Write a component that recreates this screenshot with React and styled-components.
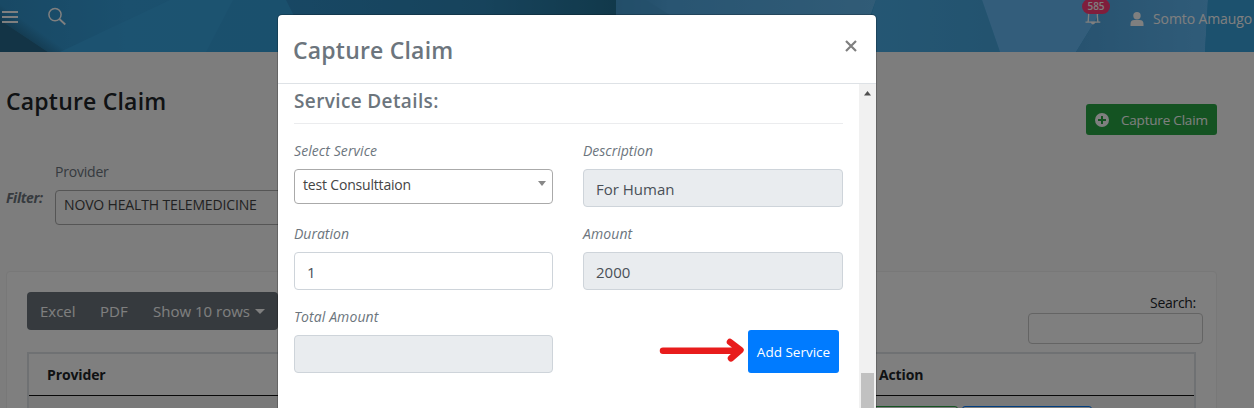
import React from "react";
import styled, { createGlobalStyle, css } from "styled-components";

const Global = createGlobalStyle`
  * { box-sizing: border-box; }
  html, body { margin: 0; overflow: hidden; }
  body { font-family: "Open Sans", "Noto Sans", sans-serif; font-size: 14px; color: #212529; background: #fafafa; }
`;

const Page = styled.div`
  position: relative;
  width: 1254px;
  height: 408px;
  overflow: hidden;
  background: #fafafa;
`;

const Txt = styled.span`
  display: inline-block;
  white-space: nowrap;
  letter-spacing: ${(p) => p.$ls || 0}px;
`;

/* ---------- page behind the dialog ---------- */
const TopBar = styled.header`
  position: relative;
  height: 52px;
  display: flex;
  justify-content: space-between;
  background: #34a0e0;
  color: #fff;
`;
const Facets = styled.svg`
  position: absolute;
  inset: 0;
`;
const NavGroup = styled.div`
  position: relative;
  display: flex;
  align-items: flex-start;
`;
const MenuIcon = styled.svg`
  margin: 11px 0 0 2px;
`;
const SearchIcon = styled.svg`
  margin: 7px 0 0 29px;
`;
const Bell = styled.div`
  position: relative;
  margin-top: 8px;
  width: 18px;
  height: 18px;
`;
const Count = styled.span`
  position: absolute;
  left: -2px;
  top: -9px;
  width: 28px;
  height: 15px;
  border-radius: 8px;
  background: #ff3d78;
  font-size: 10px;
  font-weight: 600;
  line-height: 15px;
  text-align: center;
`;
const UserIcon = styled.svg`
  margin: 12px 0 0 28px;
`;
const UserName = styled.div`
  width: 101px;
  margin: 9px 0 0 9px;
  font-size: 14px;
  line-height: 20px;
`;
const Heading = styled.div`
  display: flex;
  justify-content: space-between;
  height: 110px;
  padding: 34px 37px 0 6px;
`;
const PageTitle = styled.h1`
  margin: 0;
  font-size: 23px;
  font-weight: 600;
  line-height: 30px;
`;
const GreenButton = styled.button`
  display: flex;
  align-items: center;
  width: 131px;
  height: 31px;
  margin-top: 18px;
  padding: 0 0 0 9px;
  gap: 12px;
  border: 0;
  border-radius: 3px;
  background: #28a745;
  color: #fff;
  font: 13.5px "Open Sans", sans-serif;
`;
const Filters = styled.div`
  display: flex;
  height: 109px;
  padding-left: 6px;
`;
const FilterTag = styled.div`
  width: 49px;
  padding-top: 26px;
  font-size: 14px;
  font-weight: 700;
  font-style: italic;
  line-height: 20px;
  color: #6c757d;
`;
const FilterField = styled.div`
  width: 300px;
  line-height: 20px;
  color: #6c757d;
`;
const Select = styled.div`
  display: flex;
  justify-content: space-between;
  height: 35px;
  padding: 4px 6px 0 8px;
  border: 1px solid #aaa;
  border-radius: 4px;
  background: #fff;
  color: #444;
  font-size: 14px;
  line-height: 21px;
  ${(p) => p.$page && css`margin-top: 8px; background: transparent; line-height: 20px;`}
`;
const Card = styled.section`
  width: 1211px;
  height: 150px;
  margin-left: 6px;
  padding: 20px 13px 0 20px;
  border: 1px solid #f0f0f0;
  border-radius: 4px;
  background: #fff;
`;
const CardTools = styled.div`
  display: flex;
  justify-content: space-between;
  height: 60px;
`;
const ButtonBar = styled.div`
  display: flex;
  align-items: center;
  width: 251px;
  height: 38px;
  padding-left: 13px;
  border-radius: 4px;
  background: #6c757d;
  color: #fff;
  font-size: 15px;
`;
const BarItem = styled.div`
  width: ${(p) => p.$w}px;
  display: flex;
  align-items: center;
  gap: 5px;
`;
const SearchBox = styled.label`
  display: flex;
  flex-direction: column;
  align-items: flex-end;
  width: 175px;
  font-size: 14px;
  line-height: 20px;
  margin-top: 1px;
`;
const SearchLabel = styled.span`
  padding-right: 7px;
`;
const SearchInput = styled.div`
  width: 175px;
  height: 31px;
  border: 1px solid #c8c8c8;
  border-radius: 4px;
`;
const Table = styled.div`
  width: 1169px;
  height: 80px;
  border: 2px solid #dee2e6;
`;
const HeadRow = styled.div`
  display: flex;
  align-items: center;
  height: 42px;
  padding-left: 18px;
  border-bottom: 1px solid #111;
  font-weight: 700;
  font-size: 14px;
`;
const HeadCell = styled.div`
  width: ${(p) => p.$w}px;
`;
const BodyRow = styled.div`
  display: flex;
  gap: 4px;
  height: 34px;
  padding: 10px 0 0 790px;
  background: #f2f2f2;
`;
const RowAction = styled.div`
  flex: none;
  width: ${(p) => p.$w}px;
  height: 30px;
  border: 1px solid ${(p) => p.$c};
  border-radius: 3px;
  background: #fff;
`;

/* ---------- dialog ---------- */
const Overlay = styled.div`
  position: absolute;
  inset: 0;
  display: flex;
  align-items: flex-start;
  padding: 14px 0 0 277px;
  background: rgba(0, 0, 0, 0.5);
`;
const Dialog = styled.div`
  width: 600px;
  height: 420px;
  border: 1px solid rgba(0, 0, 0, 0.2);
  border-radius: 5px;
  background: #fff;
  background-clip: padding-box;
  color: #6c757d;
`;
const DialogHeader = styled.div`
  display: flex;
  justify-content: space-between;
  height: 69px;
  padding: 20px 19px 0 15px;
  border-bottom: 1px solid #dee2e6;
`;
const DialogTitle = styled.h2`
  margin: 0;
  font-size: 23px;
  font-weight: 600;
  line-height: 30px;
`;
const CloseIcon = styled.svg`
  margin-top: 5px;
`;
const DialogBody = styled.div`
  display: flex;
  height: 350px;
`;
const Form = styled.div`
  width: 581px;
  padding: 4px 16px 0;
`;
const SectionTitle = styled.h3`
  height: 36px;
  margin: 0 0 17px;
  border-bottom: 1px solid #ebecee;
  font-size: 19px;
  font-weight: 600;
  line-height: 27px;
`;
const Grid = styled.div`
  display: grid;
  grid-template-columns: 259px 260px;
  column-gap: 30px;
  grid-auto-rows: 83px;
`;
const Label = styled.div`
  height: 28px;
  font-size: 14px;
  font-style: italic;
  line-height: 20px;
`;
const Input = styled.div`
  height: 38px;
  padding: 0 12px;
  border: 1px solid #ced4da;
  border-radius: 4px;
  background: ${(p) => (p.$off ? "#e9ecef" : "#fff")};
  color: #495057;
  font-size: 15px;
  line-height: 39px;
`;
const Actions = styled.div`
  display: flex;
  justify-content: flex-end;
  align-items: flex-start;
  padding: 23px 4px 0 0;
`;
const Arrow = styled.svg`
  margin: 8px 3px 0 0;
`;
const BlueButton = styled.button`
  width: 91px;
  height: 43px;
  padding: 0;
  border: 0;
  border-radius: 3px;
  background: #007bff;
  color: #fff;
  font: 13.5px "Open Sans", sans-serif;
`;
const Scrollbar = styled.div`
  display: flex;
  flex-direction: column;
  justify-content: space-between;
  width: 17px;
  padding: 7px 2px 0;
  background: #f1f1f1;
`;
const Thumb = styled.div`
  width: 13px;
  height: 61px;
  background: #c1c1c1;
`;
const Caret = styled.i`
  flex: none;
  width: 0;
  height: 0;
  border: ${(p) => p.$s}px solid transparent;
  border-top: ${(p) => p.$h || p.$s}px solid ${(p) => p.$c};
  border-bottom: 0;
  margin-top: ${(p) => p.$mt || 0}px;
`;

function Field({ label, ls, children }) {
  return (
    <div>
      <Label><Txt $ls={ls}>{label}</Txt></Label>
      {children}
    </div>
  );
}

export default function App() {
  return (
    <Page>
      <Global />
      <TopBar>
        <Facets width="1254" height="52" viewBox="0 0 1254 52">
          <defs>
            <linearGradient id="deep"><stop offset="0" stopColor="#308fc8" /><stop offset=".6" stopColor="#2e87b8" /><stop offset="1" stopColor="#237296" /></linearGradient>
            <linearGradient id="base"><stop offset="0" stopColor="#3192ca" /><stop offset=".1" stopColor="#36a0dc" /><stop offset=".22" stopColor="#35a0da" /></linearGradient>
            <linearGradient id="rise"><stop offset="0" stopColor="#3f96cc" /><stop offset=".2" stopColor="#52aae4" /><stop offset="1" stopColor="#62b8ee" /></linearGradient>
            <linearGradient id="mid"><stop offset="0" stopColor="#4aaee8" /><stop offset="1" stopColor="#46a6de" /></linearGradient>
            <linearGradient id="wing"><stop offset="0" stopColor="#50a6e0" /><stop offset="1" stopColor="#60b8f2" /></linearGradient>
            <linearGradient id="fold" gradientUnits="userSpaceOnUse" x1="24" y1="46" x2="36" y2="29">
              <stop offset="0" stopColor="#205b7a" />
              <stop offset="1" stopColor="#205b7a" stopOpacity="0" />
            </linearGradient>
          </defs>
          <path d="M0 0H1254V52H0Z" fill="url(#base)" />
          <path d="M0 0L72 52H48L0 20Z" fill="url(#fold)" opacity=".75" />
          <path d="M0 20L48 52H0Z" fill="#27698c" />
          <path d="M60 52L170 0H233L206 52Z" fill="#3ba8e4" opacity=".7" />
          <path d="M286 0H616V52H312Z" fill="url(#deep)" />
          <path d="M616 0H876L865 30V52H616Z" fill="url(#rise)" />
          <path d="M616 0H646L700 34H616Z" fill="#48a0d6" opacity=".7" />
          <path d="M876 0H982L1000 52H860Z" fill="url(#mid)" />
          <path d="M982 0H1108L1076 52H1000Z" fill="#66bbf6" />
          <path d="M1108 0H1208L1205 52H1076Z" fill="url(#wing)" />
          <path d="M1208 0H1254V52H1205Z" fill="#38a2dc" />
        </Facets>
        <NavGroup>
          <MenuIcon width="16" height="13" viewBox="0 0 16 13"><path d="M0 1H16M0 6H16M0 11H16" stroke="#fff" strokeWidth="2" /></MenuIcon>
          <SearchIcon width="20" height="20" viewBox="0 0 20 20" fill="none" stroke="#fff" strokeWidth="1.5"><circle cx="8" cy="7.6" r="6.1" /><path d="M12.3 12L18.3 17.5" strokeWidth="1.8" /></SearchIcon>
        </NavGroup>
        <NavGroup>
          <Bell>
            <svg width="18" height="18" viewBox="0 0 18 18" fill="none" stroke="#fff" strokeWidth="1.3"><path d="M1.5 14.2H16.3M4 14C4.7 12 4.2 7 5 4.5Q6 2 9 2T13 4.5C13.8 7 13.3 12 14 14" /><path d="M7.3 14.5Q9 17.4 10.7 14.5Z" fill="#fff" /></svg>
            <Count>585</Count>
          </Bell>
          <UserIcon width="14" height="14" viewBox="0 0 14 14" fill="#fff"><circle cx="7" cy="3.7" r="3.7" /><path d="M.5 14V12Q.5 8 4.3 8H9.7Q13.5 8 13.5 12V14Z" /></UserIcon>
          <UserName><Txt $ls={-0.1}>Somto Amaugo</Txt></UserName>
        </NavGroup>
      </TopBar>

      <Heading>
        <PageTitle><Txt $ls={0.2}>Capture Claim</Txt></PageTitle>
        <GreenButton>
          <svg width="14" height="14" viewBox="0 0 14 14"><circle cx="7" cy="7" r="7" fill="#fff" /><path d="M7 3V11M3 7H11" stroke="#28a745" strokeWidth="2" /></svg>
          <Txt $ls={-0.2}>Capture Claim</Txt>
        </GreenButton>
      </Heading>

      <Filters>
        <FilterTag><Txt $ls={-0.35}>Filter:</Txt></FilterTag>
        <FilterField>
          <Txt $ls={-0.2}>Provider</Txt>
          <Select $page><Txt $ls={-0.15}>NOVO HEALTH TELEMEDICINE</Txt></Select>
        </FilterField>
      </Filters>

      <Card>
        <CardTools>
          <ButtonBar>
            <BarItem $w={60}><Txt>Excel</Txt></BarItem>
            <BarItem $w={53}><Txt>PDF</Txt></BarItem>
            <BarItem $w={120}><Txt>Show 10 rows</Txt><Caret $s={5} $c="#fff" /></BarItem>
          </ButtonBar>
          <SearchBox>
            <SearchLabel><Txt $ls={-0.3}>Search:</Txt></SearchLabel>
            <SearchInput />
          </SearchBox>
        </CardTools>
        <Table>
          <HeadRow>
            <HeadCell $w={832}><Txt $ls={-0.12}>Provider</Txt></HeadCell>
            <HeadCell $w={200}><Txt $ls={-0.12}>Action</Txt></HeadCell>
          </HeadRow>
          <BodyRow>
            <RowAction $w={139} $c="#28a745" />
            <RowAction $w={130} $c="#007bff" />
          </BodyRow>
        </Table>
      </Card>

      <Overlay>
        <Dialog>
          <DialogHeader>
            <DialogTitle><Txt $ls={0.2}>Capture Claim</Txt></DialogTitle>
            <CloseIcon width="12" height="12" viewBox="0 0 12 12"><path d="M1 1L11 11M11 1L1 11" stroke="#7f7f7f" strokeWidth="2.2" /></CloseIcon>
          </DialogHeader>
          <DialogBody>
            <Form>
              <SectionTitle><Txt $ls={0.37}>Service Details:</Txt></SectionTitle>
              <Grid>
                <Field label="Select Service" ls={0.08}>
                  <Select><Txt $ls={-0.18}>test Consulttaion</Txt><Caret $s={4} $h={5} $mt={7} $c="#888" /></Select>
                </Field>
                <Field label="Description"><Input $off><Txt>For Human</Txt></Input></Field>
                <Field label="Duration"><Input><Txt>1</Txt></Input></Field>
                <Field label="Amount" ls={0.1}><Input $off><Txt>2000</Txt></Input></Field>
                <Field label="Total Amount" ls={0.1}><Input $off /></Field>
                <Actions>
                  <Arrow width="86" height="24" viewBox="0 0 86 24" fill="none" stroke="#e81c1c" strokeWidth="6.5" strokeLinecap="round" strokeLinejoin="round"><path d="M4 12.7H80M71 4L81.5 12L72 20.3" /></Arrow>
                  <BlueButton><Txt>Add Service</Txt></BlueButton>
                </Actions>
              </Grid>
            </Form>
            <Scrollbar>
              <svg width="13" height="5" viewBox="0 0 13 5"><path d="M3 4.5L6.5 0L10 4.5Z" fill="#505050" /></svg>
              <Thumb />
            </Scrollbar>
          </DialogBody>
        </Dialog>
      </Overlay>
    </Page>
  );
}
